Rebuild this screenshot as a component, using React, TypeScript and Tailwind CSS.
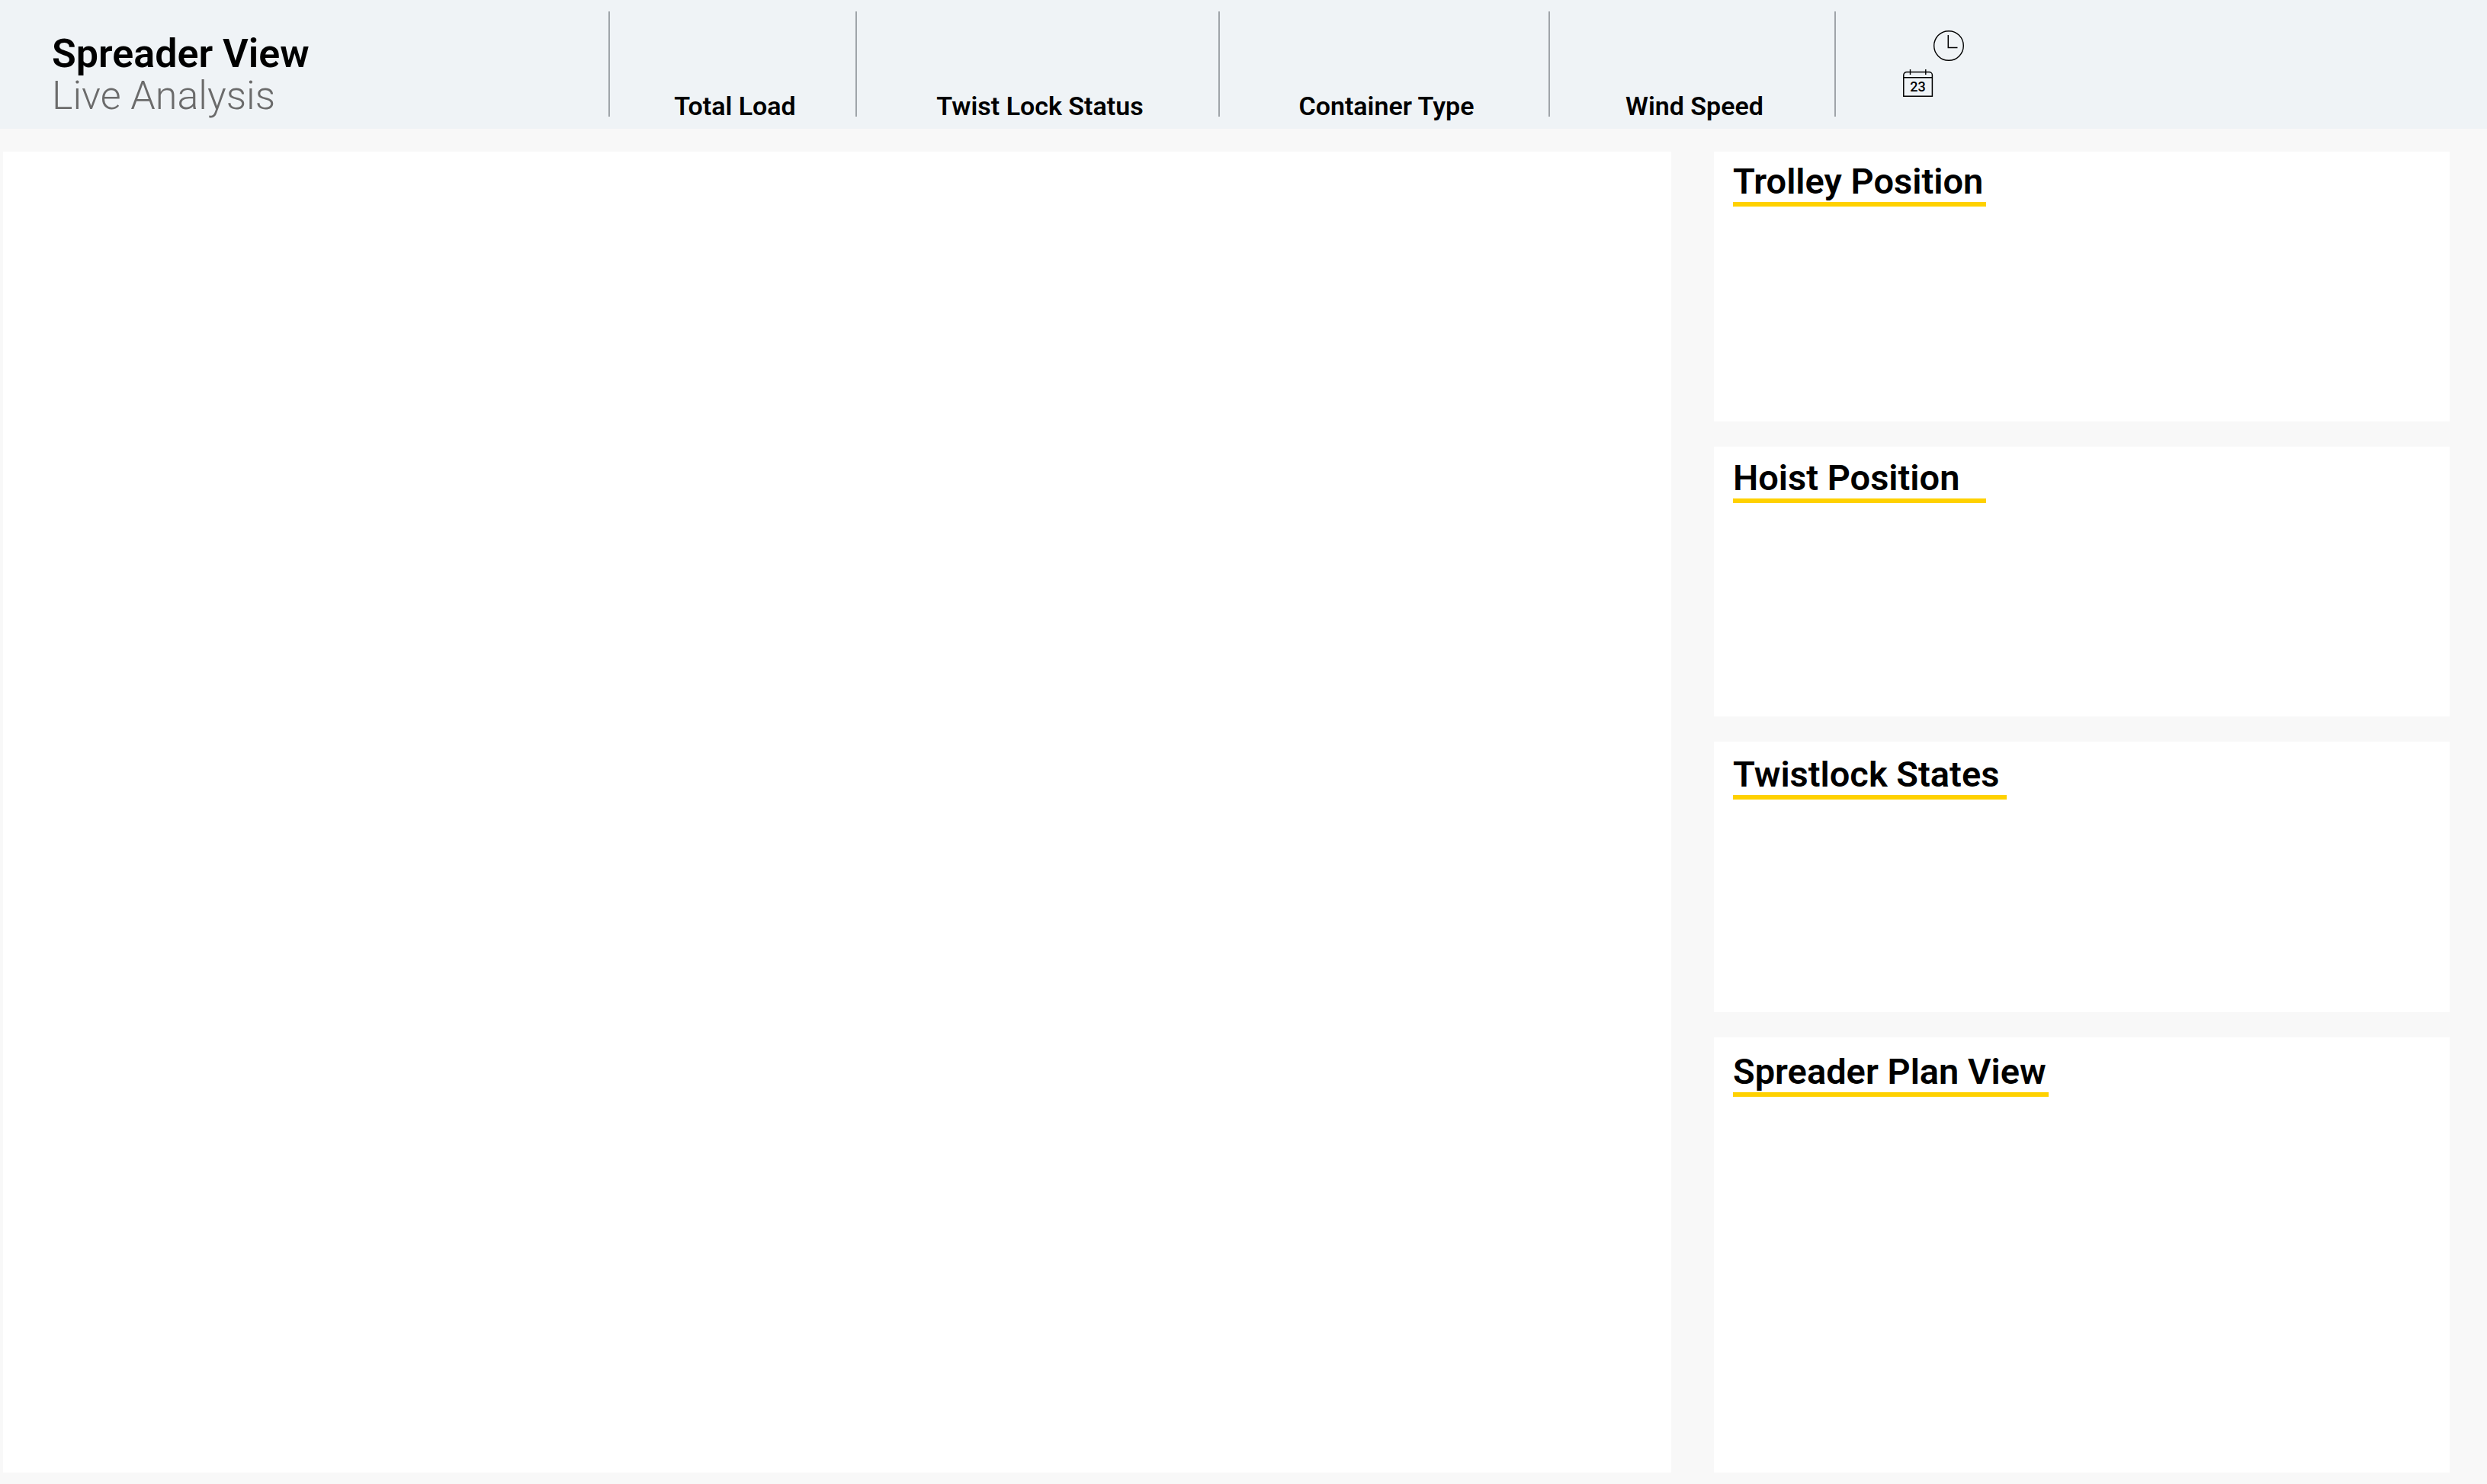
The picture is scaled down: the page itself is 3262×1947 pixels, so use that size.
const metrics = ['Total Load', 'Twist Lock Status', 'Container Type', 'Wind Speed'];

const panels = [
  { title: 'Trolley Position', line: 'w-[332px]', top: 'pt-3' },
  { title: 'Hoist Position', line: 'w-[332px]', top: 'pt-3.5' },
  { title: 'Twistlock States', line: 'w-[359px]', top: 'pt-4' },
  { title: 'Spreader Plan View', line: 'w-[414px]', top: 'pt-4.5' },
];

function ClockIcon() {
  return (
    <svg className="ml-10 size-10" viewBox="0 0 40 40" fill="none" stroke="black" aria-hidden="true">
      <circle cx="20" cy="20" r="19.3" strokeWidth="1.4" />
      <path d="M19.3 6v16.5H31.5" strokeWidth="1.5" />
    </svg>
  );
}

function CalendarIcon() {
  return (
    <svg className="h-9 w-10" viewBox="0 0 40 36" fill="none" stroke="black" aria-hidden="true">
      <path d="M0.8 35.3V7.5a4 4 0 0 1 4-4h29.6a4 4 0 0 1 4 4v27.8z" strokeWidth="1.5" />
      <path d="M0.8 10.7h37.6M9.5 0v7M29.8 0v7" strokeWidth="1.4" />
      <text
        x="19.5"
        y="29.3"
        textAnchor="middle"
        fill="black"
        stroke="none"
        fontFamily="Roboto, sans-serif"
        fontSize="18"
        fontWeight="500"
      >
        23
      </text>
    </svg>
  );
}

export default function App() {
  return (
    <div className="flex min-h-screen flex-col bg-[#f8f8f8] font-['Roboto',sans-serif] text-black">
      <header className="grid h-[169px] grid-cols-[798fr_324fr_476fr_433fr_375fr_856fr] bg-[#eff3f6] pt-[15px] pb-4">
        <div className="flex flex-col justify-end pl-[68px]">
          <h1 className="text-[52px] leading-[55px] font-semibold">Spreader View</h1>
          <p className="text-[52px] leading-[55px] font-light text-[#6b6b6b]">Live Analysis</p>
        </div>
        {metrics.map((name) => (
          <div key={name} className="flex items-end justify-center border-l-2 border-[#9fa4a9] pl-1.5">
            <h2 className="text-[34px] leading-7 font-semibold whitespace-nowrap">{name}</h2>
          </div>
        ))}
        <div className="flex flex-col gap-[11px] border-l-2 border-[#9fa4a9] pt-[25px] pl-[88px]">
          <ClockIcon />
          <CalendarIcon />
        </div>
      </header>

      <main className="grid flex-1 grid-cols-[2188fr_965fr] gap-14 pt-[30px] pr-[49px] pb-[15px] pl-1">
        <section aria-label="Spreader view" className="bg-white" />
        <aside className="grid grid-rows-[354fr_354fr_354fr_571fr] gap-[33px]">
          {panels.map((panel) => (
            <section key={panel.title} className={`bg-white px-[25px] ${panel.top}`}>
              <h2 className={`border-b-6 border-[#ffd100] text-[47px] leading-[54px] font-semibold whitespace-nowrap ${panel.line}`}>
                {panel.title}
              </h2>
            </section>
          ))}
        </aside>
      </main>
    </div>
  );
}
